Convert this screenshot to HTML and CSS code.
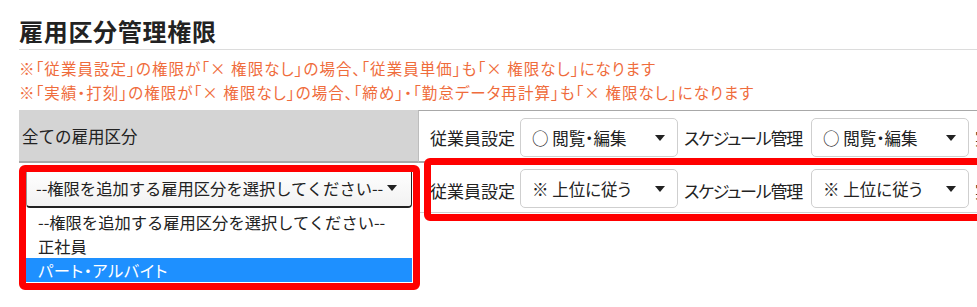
FILE: index.html
```html
<!DOCTYPE html>
<html lang="ja">
<head>
<meta charset="utf-8">
<link rel="stylesheet" href="styles.css">
</head>
<body>
<div class="page">
  <h2 class="title">雇用区分管理権限</h2>
  <div class="notes">
    <p>※「従業員設定」の権限が「× 権限なし」の場合、「従業員単価」も「× 権限なし」になります</p>
    <p>※「実績・打刻」の権限が「× 権限なし」の場合、「締め」・「勤怠データ再計算」も「× 権限なし」になります</p>
  </div>
  <div class="perm-table">
    <div class="cell head-left">全ての雇用区分</div>
    <div class="cell head-right">
      <span class="label">従業員設定</span>
      <div class="sel"><span>○ 閲覧・編集</span><i class="arrow"></i></div>
      <span class="label label-kana">スケジュール管理</span>
      <div class="sel"><span>○ 閲覧・編集</span><i class="arrow"></i></div>
      <span class="label">実績・打刻</span>
    </div>
    <div class="cell body-left">
      <div class="big-sel"><span>--権限を追加する雇用区分を選択してください--</span><i class="arrow"></i></div>
    </div>
    <div class="cell body-right">
      <span class="label">従業員設定</span>
      <div class="sel"><span>※ 上位に従う</span><i class="arrow"></i></div>
      <span class="label label-kana">スケジュール管理</span>
      <div class="sel"><span>※ 上位に従う</span><i class="arrow"></i></div>
      <span class="label">実績・打刻</span>
    </div>
    <ul class="dropdown">
      <li>--権限を追加する雇用区分を選択してください--</li>
      <li>正社員</li>
      <li class="active">パート・アルバイト</li>
    </ul>
    <div class="mark mark-left"></div>
    <div class="mark mark-right"></div>
  </div>
</div>
</body>
</html>
```
FILE: styles.css
```css
html, body {
  margin: 0;
  padding: 0;
  background: #fff;
  overflow: hidden;
}
body {
  font-family: "Noto Sans CJK JP", "Noto Sans", sans-serif;
  color: #222;
  font-size: 16px;
  width: 977px;
  height: 307px;
}
.page {
  padding-left: 19px;
  width: 958px;
}
.title {
  margin: 0;
  padding-top: 14px;
  height: 35px;
  font-size: 24px;
  line-height: 34px;
  font-weight: 700;
  letter-spacing: 0.7px;
  color: #222;
  border-bottom: 1px solid #dcdcdc;
}
.notes {
  padding-top: 6px;
  color: #ef6c3c;
  font-size: 15.5px;
  line-height: 24px;
  height: 54px;
  font-feature-settings: "palt";
  letter-spacing: 1.05px;
}
.notes p {
  margin: 0;
  white-space: nowrap;
}
.perm-table {
  position: relative;
  display: grid;
  grid-template-columns: 399px 559px;
  grid-template-rows: 53px 50px;
  white-space: nowrap;
}
.cell {
  display: flex;
  align-items: center;
  min-width: 0;
}
.head-left {
  background: #d4d4d4;
  padding-left: 3px;
  border-bottom: 2px solid #a8a8a8;
  box-sizing: border-box;
  font-size: 16.5px;
}
.head-right {
  border-top: 1px solid #a8a8a8;
  border-left: 1px solid #bdbdbd;
  border-bottom: 2px solid #a8a8a8;
  box-sizing: border-box;
  padding-left: 11px;
  padding-top: 3px;
  overflow: hidden;
}
.body-left {
  align-items: flex-start;
  padding: 5px 6px 0 7px;
}
.body-right {
  align-items: flex-start;
  padding-top: 6px;
  padding-left: 12px;
  overflow: hidden;
  border-bottom: 1px solid #d0d0d0;
  box-sizing: border-box;
}
.body-right .label {
  margin-top: 9px;
}
.label {
  font-size: 17px;
  margin-right: 5px;
  flex: none;
}
.label-kana {
  font-feature-settings: "palt";
  letter-spacing: -1.2px;
  margin-right: 9px;
}
.sel {
  flex: none;
  box-sizing: border-box;
  width: 158px;
  height: 39px;
  border: 1px solid #cfcfcf;
  border-radius: 5px;
  background: #fff;
  display: flex;
  align-items: center;
  justify-content: space-between;
  padding: 0 12px 0 11px;
  margin-right: 6px;
  font-size: 16.5px;
  font-feature-settings: "palt";
}
.arrow {
  display: block;
  width: 0;
  height: 0;
  border-left: 5px solid transparent;
  border-right: 5px solid transparent;
  border-top: 6px solid #222;
}
.big-sel {
  box-sizing: border-box;
  width: 386px;
  height: 40px;
  border: 1px solid #999;
  border-right-color: #222;
  border-bottom: 2px solid #222;
  border-radius: 4px;
  background: linear-gradient(#ffffff, #f2f2f2);
  display: flex;
  align-items: center;
  justify-content: space-between;
  padding: 0 14px 0 9px;
  font-size: 16.3px;
}
.dropdown {
  position: absolute;
  left: 7px;
  top: 100px;
  width: 386px;
  margin: 0;
  padding: 0;
  list-style: none;
  background: #fff;
  box-sizing: border-box;
  font-size: 16.3px;
  line-height: 24px;
  z-index: 2;
  font-feature-settings: "palt";
}
.dropdown li {
  padding-left: 12px;
}
.dropdown li:first-child {
  font-feature-settings: normal;
}
.dropdown li.active {
  background: #1e90ff;
  color: #fff;
  letter-spacing: 0.6px;
}
.mark {
  position: absolute;
  box-sizing: border-box;
  border: 7px solid #ff0000;
  border-radius: 6px;
  z-index: 3;
}
.mark-left {
  left: 0;
  top: 55px;
  width: 401px;
  height: 125px;
}
.mark-right {
  left: 405px;
  top: 48px;
  width: 570px;
  height: 63px;
}
```
